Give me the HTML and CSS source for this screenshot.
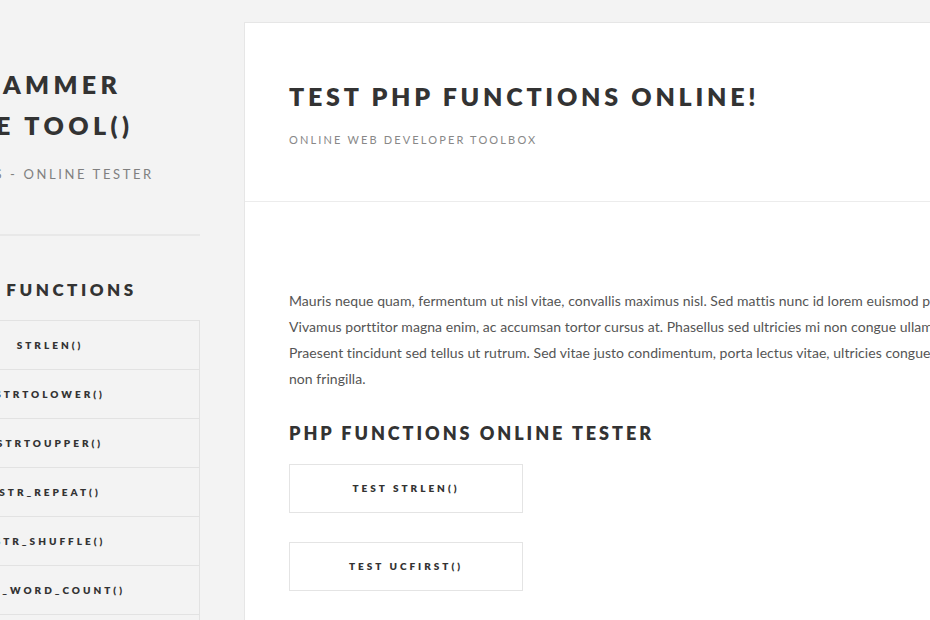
FILE: index.html
```html
<!DOCTYPE html>
<html lang="en">
<head>
<meta charset="utf-8">
<title>Test PHP Functions Online!</title>
<link rel="stylesheet" href="styles.css">
</head>
<body>
<div class="page">
  <aside class="sidebar">
    <div class="brand">
      <h1 class="brand-title">PROGRAMMER ONLINE TOOL()</h1>
      <p class="brand-sub">PHP STRINGS - ONLINE TESTER</p>
    </div>
    <hr class="divider">
    <h2 class="side-heading">POPULAR FUNCTIONS</h2>
    <ul class="fn-list">
      <li class="fn-item">STRLEN()</li>
      <li class="fn-item">STRTOLOWER()</li>
      <li class="fn-item">STRTOUPPER()</li>
      <li class="fn-item">STR_REPEAT()</li>
      <li class="fn-item">STR_SHUFFLE()</li>
      <li class="fn-item">STR_WORD_COUNT()</li>
      <li class="fn-item">UCFIRST()</li>
    </ul>
  </aside>
  <main class="card">
    <header class="card-header">
      <h1 class="card-title">TEST PHP FUNCTIONS ONLINE!</h1>
      <p class="card-sub">ONLINE WEB DEVELOPER TOOLBOX</p>
    </header>
    <section class="card-body">
      <p class="intro">Mauris neque quam, fermentum ut nisl vitae, convallis maximus nisl. Sed mattis nunc id lorem euismod placerat. Vivamus porttitor magna enim, ac accumsan tortor cursus at. Phasellus sed ultricies mi non congue ullamcorper. Praesent tincidunt sed tellus ut rutrum. Sed vitae justo condimentum, porta lectus vitae, ultricies congue gravida<br>non fringilla.</p>
      <h2 class="section-title">PHP FUNCTIONS ONLINE TESTER</h2>
      <div class="tests">
        <a class="test-btn">TEST STRLEN()</a>
        <a class="test-btn">TEST UCFIRST()</a>
      </div>
    </section>
  </main>
</div>
</body>
</html>
```
FILE: styles.css
```css
html {
  overflow: hidden;
}
body {
  margin: 0;
  background: #f3f3f3;
  font-family: "Lato", "Open Sans", sans-serif;
  color: #333;
}
.page {
  display: flex;
  align-items: flex-start;
  gap: 44px;
  margin-left: -106px;
  padding-top: 22px;
}
.sidebar {
  flex: 0 0 306px;
  padding-top: 42px;
}
.brand-title {
  margin: 0;
  font-size: 25px;
  line-height: 41px;
  font-weight: 800;
  letter-spacing: 4.4px;
  color: #333;
}
.brand-sub {
  margin: 19px 0 0;
  font-size: 13px;
  line-height: 19.5px;
  letter-spacing: 2.6px;
  color: #808080;
}
.divider {
  margin: 49px 0 0;
  border: 0;
  height: 2px;
  background: #e8e8e8;
}
.side-heading {
  margin: 44px 0 0;
  font-size: 17px;
  line-height: 1.2;
  font-weight: 800;
  letter-spacing: 3.5px;
  color: #333;
}
.fn-list {
  list-style: none;
  margin: 20px 0 0 6px;
  padding: 0;
  border-top: 1px solid #e2e2e2;
  border-left: 1px solid #e2e2e2;
  border-right: 1px solid #e2e2e2;
}
.fn-item {
  height: 48px;
  display: flex;
  align-items: center;
  justify-content: center;
  border-bottom: 1px solid #e2e2e2;
  font-size: 10px;
  font-weight: 800;
  letter-spacing: 3px;
  color: #333;
}
.card {
  flex: 0 0 792px;
  background: #fff;
  border: 1px solid #e6e6e6;
  min-height: 700px;
}
.card-header {
  padding: 58px 44px 55px;
  border-bottom: 1px solid #ececec;
}
.card-title {
  margin: 0;
  font-size: 25px;
  line-height: 1.2;
  font-weight: 800;
  letter-spacing: 3.75px;
  color: #333;
}
.card-sub {
  margin: 22px 0 0;
  font-size: 11px;
  line-height: 1.2;
  letter-spacing: 2.15px;
  color: #888;
}
.card-body {
  padding: 86px 44px 40px;
}
.intro {
  margin: 0;
  font-size: 14px;
  line-height: 26px;
  letter-spacing: 0.05px;
  color: #555;
}
.section-title {
  margin: 31px 0 0;
  font-size: 18px;
  line-height: 1.2;
  font-weight: 800;
  letter-spacing: 2.95px;
  color: #333;
}
.tests {
  margin-top: 19px;
  display: flex;
  flex-direction: column;
  gap: 29px;
}
.test-btn {
  width: 232px;
  height: 47px;
  display: flex;
  align-items: center;
  justify-content: center;
  border: 1px solid #e4e4e4;
  font-size: 10px;
  font-weight: 800;
  letter-spacing: 3px;
  color: #333;
}
```
